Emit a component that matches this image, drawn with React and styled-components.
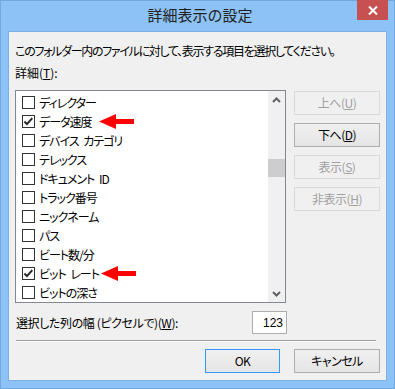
import React from "react";
import styled, { createGlobalStyle } from "styled-components";

const Global = createGlobalStyle`
  html, body { margin: 0; padding: 0; background: #8cc2f5; }
  body { font-family: "Meiryo UI", "Noto Sans CJK JP", "Noto Sans", sans-serif; }
`;

const FONT = `"Meiryo UI", "Noto Sans CJK JP", "Noto Sans", sans-serif`;

const Window = styled.div`
  width: 395px;
  height: 389px;
  box-sizing: border-box;
  background: #8cc2f5;
  border: 1px solid #6fa8dd;
  display: flex;
  flex-direction: column;
  padding: 0 7px 7px 7px;
`;

const TitleBar = styled.div`
  height: 30px;
  display: grid;
  grid-template-columns: 1fr auto 1fr;
  align-items: start;
  margin: 0 -1px 0 0;
`;

const Title = styled.div`
  grid-column: 2;
  font-family: ${FONT};
  font-size: 15px;
  line-height: 28px;
  color: #222;
  padding-left: 4px;
`;

const CloseButton = styled.div`
  grid-column: 3;
  justify-self: end;
  width: 31px;
  height: 20px;
  margin-top: -1px;
  background: #c75050;
  display: flex;
  align-items: center;
  justify-content: center;
`;

const Client = styled.div`
  flex: 1;
  background: #f0f0f0;
  border: 1px solid #7cb0e2;
  box-sizing: border-box;
  padding: 11px 6px 7px 6px;
  display: flex;
  flex-direction: column;
  font-family: ${FONT};
  font-size: 12px;
  font-feature-settings: "palt";
  color: #000;
`;

const Text = styled.div`
  line-height: 16px;
  height: 16px;
  white-space: nowrap;
  margin-top: ${(p) => p.$mt || 0}px;
  letter-spacing: ${(p) => p.$ls || 0}px;
`;

const MainRow = styled.div`
  display: flex;
  gap: 8px;
  margin-top: 9px;
`;

const ListBox = styled.div`
  width: 271px;
  height: 213px;
  box-sizing: border-box;
  border: 1px solid #828790;
  background: #fff;
  display: flex;
`;

const Items = styled.div`
  flex: 1;
  padding-top: 2px;
  display: flex;
  flex-direction: column;
`;

const Item = styled.div`
  position: relative;
  height: 19px;
  display: flex;
  align-items: center;
  padding-left: 6px;
  gap: 4px;
  white-space: pre;
  letter-spacing: -1px;
  word-spacing: 3px;
`;

const CheckBox = styled.div`
  width: 13px;
  height: 13px;
  box-sizing: border-box;
  border: 1px solid #333;
  background: #fff;
  display: flex;
  align-items: center;
  justify-content: center;
  flex-shrink: 0;
`;

const Arrow = styled.svg`
  position: absolute;
  left: ${(p) => p.$left}px;
  top: ${(p) => p.$top}px;
`;

const ScrollBar = styled.div`
  width: 17px;
  background: #f0f0f0;
  display: flex;
  flex-direction: column;
  align-items: center;
`;

const ScrollArrow = styled.div`
  height: 17px;
  width: 17px;
  display: flex;
  align-items: center;
  justify-content: center;
`;

const Track = styled.div`
  flex: 1;
  width: 17px;
  display: flex;
  flex-direction: column;
`;

const Thumb = styled.div`
  margin-top: ${(p) => p.$top}px;
  height: ${(p) => p.$h}px;
  width: 17px;
  background: #cdcdcd;
`;

const SideButtons = styled.div`
  display: flex;
  flex-direction: column;
  gap: 8px;
  padding-top: 1px;
`;

const Button = styled.div`
  width: ${(p) => p.$w || 86}px;
  height: 24px;
  box-sizing: border-box;
  border: 1px solid ${(p) => (p.$disabled ? "#d9d9d9" : p.$default ? "#3399ff" : "#adadad")};
  background: ${(p) => (p.$disabled ? "#f0f0f0" : "linear-gradient(#f0f0f0, #e5e5e5)")};
  color: ${(p) => (p.$disabled ? "#a0a0a0" : "#000")};
  display: flex;
  align-items: center;
  justify-content: center;
  line-height: 16px;
  font-size: 12px;
  letter-spacing: -0.5px;
`;

const WidthRow = styled.div`
  display: flex;
  align-items: center;
  justify-content: space-between;
  margin-top: 8px;
  padding-right: 93px;
  padding-left: 1px;
  letter-spacing: -0.4px;
  white-space: pre;
`;

const NumberBox = styled.div`
  width: 35px;
  height: 23px;
  box-sizing: border-box;
  border: 1px solid #abadb3;
  background: #fff;
  display: flex;
  align-items: center;
  justify-content: flex-end;
  padding-right: 3px;
  font-family: "Liberation Sans", "Noto Sans", sans-serif;
  font-size: 12px;
  letter-spacing: 0;
`;

const Separator = styled.div`
  margin: 6px 4px 0 1px;
  height: 1px;
  background: #a0a0a0;
  border-bottom: 1px solid #fff;
`;

const Footer = styled.div`
  display: flex;
  justify-content: flex-end;
  gap: 14px;
  margin-top: 7px;
`;

const items = [
  ["ディレクター", false],
  ["データ速度", true, 61],
  ["デバイス カテゴリ", false],
  ["テレックス", false],
  ["ドキュメント ID", false],
  ["トラック番号", false],
  ["ニックネーム", false],
  ["パス", false],
  ["ビート数/分", false],
  ["ビット レート", true, 63],
  ["ビットの深さ", false],
];

const Check = () => (
  <svg width="11" height="11" viewBox="0 0 11 11">
    <path d="M1.5 5.5 L4 8.2 L9.3 2.2" fill="none" stroke="#222" strokeWidth="1.9" />
  </svg>
);

const RedArrow = ({ left }) => (
  <Arrow $left={left} $top={2} width="35" height="15" viewBox="0 0 35 15">
    <path d="M0 7.5 L17 0 L17 5 L35 5 L35 10 L17 10 L17 15 Z" fill="#ff0000" />
  </Arrow>
);

export default function App() {
  return (
    <>
      <Global />
      <Window>
        <TitleBar>
          <Title>詳細表示の設定</Title>
          <CloseButton>
            <svg width="10" height="9" viewBox="0 0 10 9">
              <path d="M1 0.5 L9 8.5 M9 0.5 L1 8.5" stroke="#fff" strokeWidth="2" />
            </svg>
          </CloseButton>
        </TitleBar>
        <Client>
          <Text $ls={-1.3}>このフォルダー内のファイルに対して、表示する項目を選択してください。</Text>
          <Text $mt={6}>
            詳細(<u>T</u>):
          </Text>
          <MainRow>
            <ListBox>
              <Items>
                {items.map(([label, checked, arrow]) => (
                  <Item key={label}>
                    <CheckBox>{checked && <Check />}</CheckBox>
                    <span>{label}</span>
                    {arrow && <RedArrow left={arrow + 22} />}
                  </Item>
                ))}
              </Items>
              <ScrollBar>
                <ScrollArrow>
                  <svg width="9" height="6" viewBox="0 0 9 6">
                    <path d="M1 5 L4.5 1.5 L8 5" fill="none" stroke="#606060" strokeWidth="2" />
                  </svg>
                </ScrollArrow>
                <Track>
                  <Thumb $top={51} $h={18} />
                </Track>
                <ScrollArrow>
                  <svg width="9" height="6" viewBox="0 0 9 6">
                    <path d="M1 1 L4.5 4.5 L8 1" fill="none" stroke="#606060" strokeWidth="2" />
                  </svg>
                </ScrollArrow>
              </ScrollBar>
            </ListBox>
            <SideButtons>
              <Button $disabled>
                上へ(<u>U</u>)
              </Button>
              <Button>
                下へ(<u>D</u>)
              </Button>
              <Button $disabled>
                表示(<u>S</u>)
              </Button>
              <Button $disabled>
                非表示(<u>H</u>)
              </Button>
            </SideButtons>
          </MainRow>
          <WidthRow>
            <span>
              選択した列の幅 (ピクセルで)(<u>W</u>):
            </span>
            <NumberBox>123</NumberBox>
          </WidthRow>
          <Separator />
          <Footer>
            <Button $default $w={75}>
              OK
            </Button>
            <Button>キャンセル</Button>
          </Footer>
        </Client>
      </Window>
    </>
  );
}
